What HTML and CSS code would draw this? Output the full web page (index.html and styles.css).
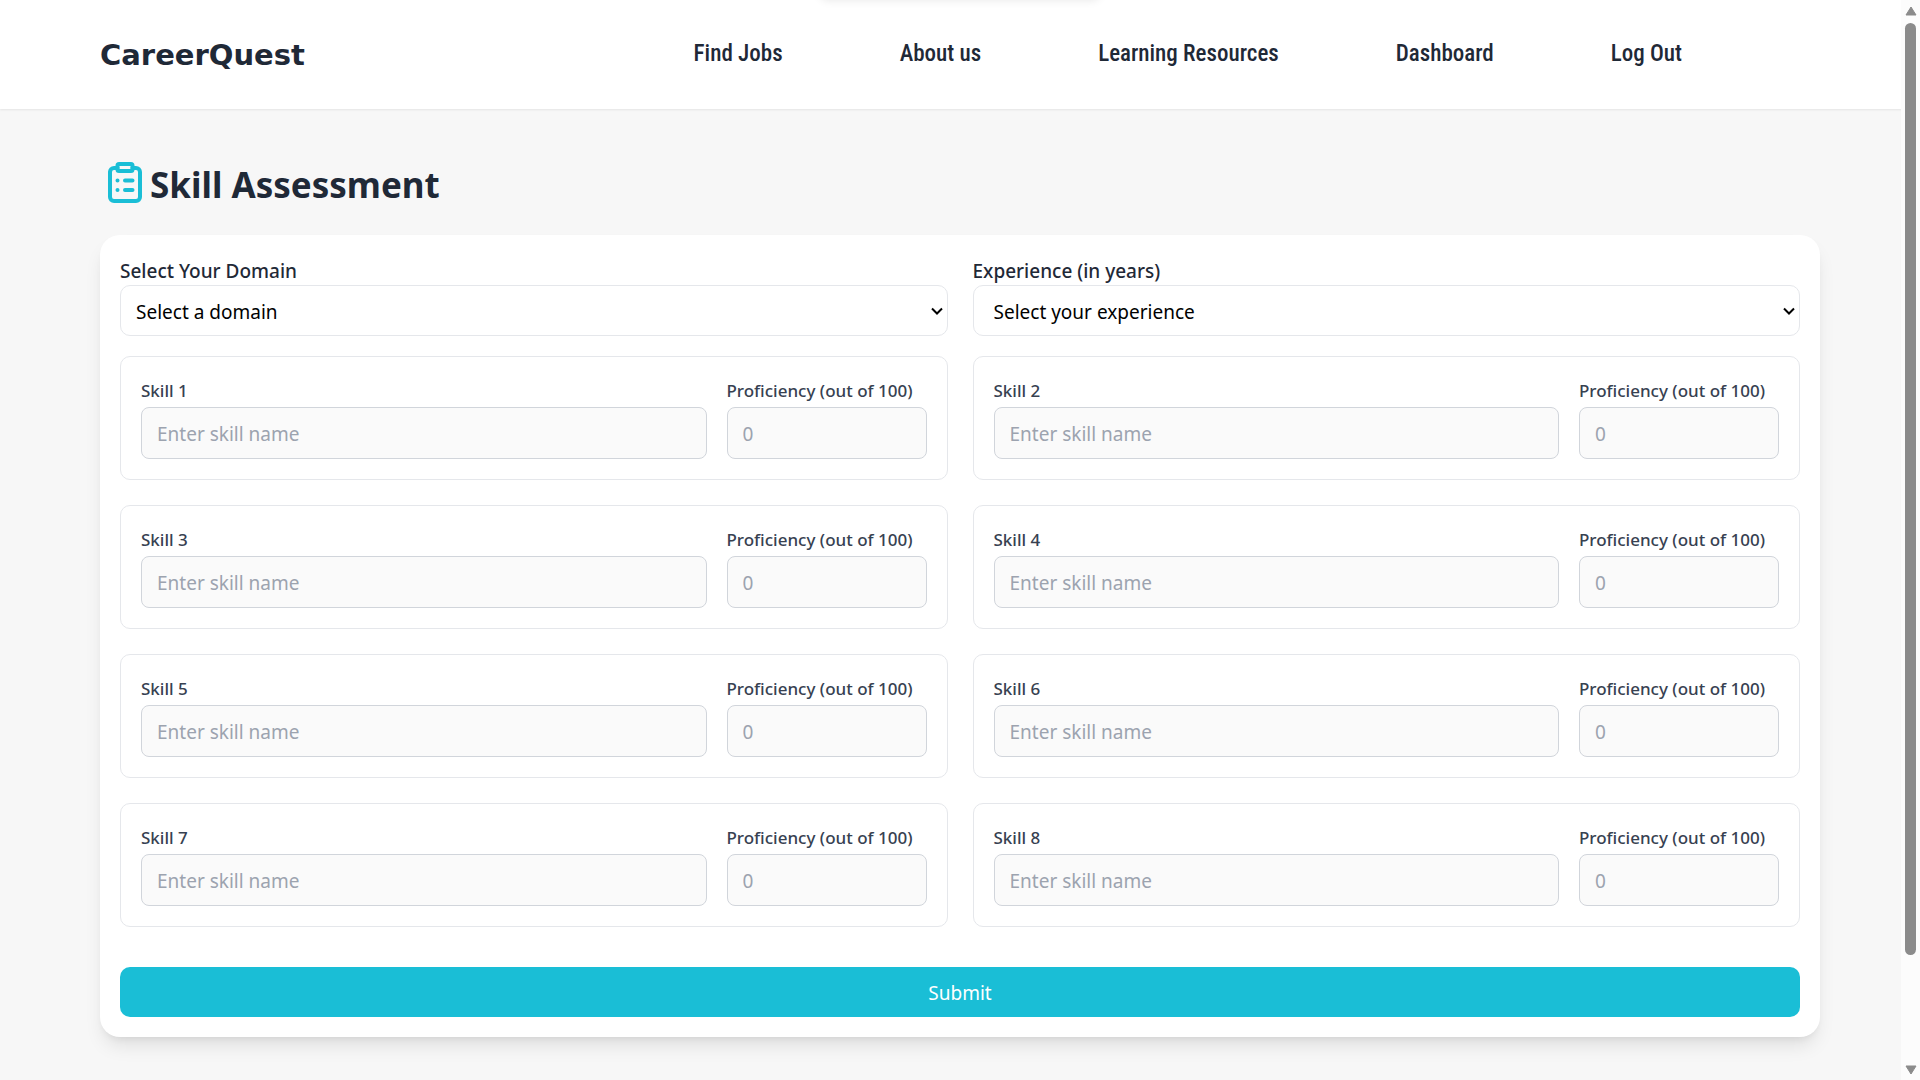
FILE: index.html
```
<!DOCTYPE html>
<html lang="en">
<head>
<meta charset="utf-8">
<meta name="viewport" content="width=device-width, initial-scale=1">
<title>CareerQuest - Skill Assessment</title>
<link rel="stylesheet" href="styles.css">
</head>
<body>
<header class="site-header">
  <a class="logo" href="#">CareerQuest</a>
  <nav class="nav">
    <a href="#">Find Jobs</a>
    <a href="#">About us</a>
    <a href="#">Learning Resources</a>
    <a href="#">Dashboard</a>
    <a href="#">Log Out</a>
  </nav>
</header>
<main class="page">
  <h1 class="title">
    <svg class="title-icon" viewBox="0 0 50 50" aria-hidden="true">
      <path d="M17.500 10H14a4 4 0 0 0-4 4v25a4 4 0 0 0 4 4h22a4 4 0 0 0 4-4V14a4 4 0 0 0-4-4h-3.500"/>
      <rect x="17.500" y="6" width="15" height="7" rx="1.500"/>
      <path d="M17.500 22.500h.01M25 22.500h7.500M17.500 32h.01M25 32h7.500"/>
    </svg>
    <span class="title-text">Skill Assessment</span>
  </h1>
  <form class="card">
    <div class="columns">
      <div class="choice">
        <label for="domain">Select Your Domain</label>
        <select id="domain" class="select"><option>Select a domain</option></select>
      </div>
      <div class="choice">
        <label for="experience">Experience (in years)</label>
        <select id="experience" class="select select-inset"><option>Select your experience</option></select>
      </div>
    </div>
    <div class="columns skills">
      <div class="skill">
        <div class="field"><label for="skill1">Skill 1</label><input id="skill1" type="text" placeholder="Enter skill name"></div>
        <div class="field"><label for="prof1">Proficiency (out of 100)</label><input id="prof1" type="number" placeholder="0"></div>
      </div>
      <div class="skill">
        <div class="field"><label for="skill2">Skill 2</label><input id="skill2" type="text" placeholder="Enter skill name"></div>
        <div class="field"><label for="prof2">Proficiency (out of 100)</label><input id="prof2" type="number" placeholder="0"></div>
      </div>
      <div class="skill">
        <div class="field"><label for="skill3">Skill 3</label><input id="skill3" type="text" placeholder="Enter skill name"></div>
        <div class="field"><label for="prof3">Proficiency (out of 100)</label><input id="prof3" type="number" placeholder="0"></div>
      </div>
      <div class="skill">
        <div class="field"><label for="skill4">Skill 4</label><input id="skill4" type="text" placeholder="Enter skill name"></div>
        <div class="field"><label for="prof4">Proficiency (out of 100)</label><input id="prof4" type="number" placeholder="0"></div>
      </div>
      <div class="skill">
        <div class="field"><label for="skill5">Skill 5</label><input id="skill5" type="text" placeholder="Enter skill name"></div>
        <div class="field"><label for="prof5">Proficiency (out of 100)</label><input id="prof5" type="number" placeholder="0"></div>
      </div>
      <div class="skill">
        <div class="field"><label for="skill6">Skill 6</label><input id="skill6" type="text" placeholder="Enter skill name"></div>
        <div class="field"><label for="prof6">Proficiency (out of 100)</label><input id="prof6" type="number" placeholder="0"></div>
      </div>
      <div class="skill">
        <div class="field"><label for="skill7">Skill 7</label><input id="skill7" type="text" placeholder="Enter skill name"></div>
        <div class="field"><label for="prof7">Proficiency (out of 100)</label><input id="prof7" type="number" placeholder="0"></div>
      </div>
      <div class="skill">
        <div class="field"><label for="skill8">Skill 8</label><input id="skill8" type="text" placeholder="Enter skill name"></div>
        <div class="field"><label for="prof8">Proficiency (out of 100)</label><input id="prof8" type="number" placeholder="0"></div>
      </div>
    </div>
    <button class="submit" type="submit">Submit</button>
  </form>
</main>
<div class="scrollbar" aria-hidden="true">
  <svg class="arrow" viewBox="0 0 12 10"><path d="M6 1 11 9H1z"/></svg>
  <div class="track"><div class="thumb"></div></div>
  <svg class="arrow" viewBox="0 0 12 10"><path d="M6 9 11 1H1z"/></svg>
</div>
</body>
</html>
```
FILE: styles.css
```
* {
  box-sizing: border-box;
}

body {
  margin: 0;
  min-height: 100vh;
  background: #f7f7f7;
  color: #1f2937;
  font-family: "Noto Sans", sans-serif;
  font-size: 19px;
  line-height: 30px;
}

.site-header {
  position: relative;
  display: flex;
  align-items: center;
  justify-content: space-between;
  height: 109px;
  padding: 0 238px 0 100px;
  background: #fff;
  box-shadow: 0 1px 2px rgba(0, 0, 0, 0.08);
}

/* Soft shade of the panel tucked above the top edge */
.site-header::before {
  content: "";
  position: absolute;
  bottom: 100%;
  left: 50%;
  width: 280px;
  height: 40px;
  margin-left: -140px;
  border-radius: 8px;
  box-shadow: 0 0 10px rgba(0, 0, 0, 0.1);
}

.logo {
  color: #1f2937;
  font: bold 29px/40px "DejaVu Sans", sans-serif;
  text-decoration: none;
}

.nav {
  display: flex;
  gap: 117px;
  padding-bottom: 2px;
}

.nav a {
  color: #1f2937;
  font: 500 23px/30px "Roboto Condensed", "Liberation Sans Narrow", Roboto, sans-serif;
  text-decoration: none;
}

.page {
  padding: 45px 100px 40px;
}

.title {
  display: flex;
  align-items: center;
  height: 58px;
  margin: 0 0 23px;
  font-size: 35px;
  font-weight: 700;
  line-height: 50px;
}

.title-text {
  padding-top: 4px;
}

.title-icon {
  width: 50px;
  height: 50px;
  fill: none;
  stroke: #1abed6;
  stroke-width: 4;
  stroke-linecap: round;
  stroke-linejoin: round;
}

.card {
  padding: 22px 20px 20px;
  border-radius: 20px;
  background: #fff;
  box-shadow: 0 12px 19px -4px rgba(0, 0, 0, 0.1), 0 5px 8px -5px rgba(0, 0, 0, 0.1);
}

.columns {
  display: grid;
  grid-template-columns: 1fr 1fr;
  gap: 25px;
}

.choice {
  display: flex;
  flex-direction: column;
  font-weight: 500;
  line-height: 28px;
}

.select {
  appearance: none;
  height: 51px;
  padding: 2px 30px 0 15px;
  border: 1px solid #e5e7eb;
  border-radius: 10px;
  background: #fff url("data:image/svg+xml,%3Csvg xmlns='http://www.w3.org/2000/svg' viewBox='0 0 12 8' fill='none' stroke='black' stroke-width='2'%3E%3Cpath d='M1 1.500 6 6.500 11 1.500'/%3E%3C/svg%3E") no-repeat right 4px center / 12px 8px;
  color: #000;
  font: inherit;
  font-weight: 400;
}

.select-inset {
  padding-left: 20px;
}

.skills {
  margin-top: 20px;
}

.skill {
  display: grid;
  grid-template-columns: 1fr 200px;
  gap: 20px;
  padding: 22px 20px 20px;
  border: 1px solid #e5e7eb;
  border-radius: 10px;
}

.field {
  display: flex;
  flex-direction: column;
  gap: 5px;
}

.field label {
  color: #374151;
  font-size: 17px;
  font-weight: 500;
  line-height: 23px;
}

.field input {
  width: 100%;
  height: 52px;
  padding: 2px 15px 0;
  border: 1px solid #d1d5db;
  border-radius: 8px;
  background: #fafafa;
  font: inherit;
}

.field input::placeholder {
  color: #9ca3af;
}

.submit {
  display: block;
  width: 100%;
  height: 50px;
  margin-top: 40px;
  padding: 2px 0 0;
  border: 0;
  border-radius: 10px;
  background: #1abed6;
  color: #fff;
  font: inherit;
}

.scrollbar {
  position: fixed;
  top: 0;
  right: 0;
  bottom: 0;
  display: flex;
  flex-direction: column;
  align-items: center;
  gap: 7px;
  width: 19px;
  padding: 6px 0 5px;
  background: #fcfcfc;
}

.arrow {
  width: 12px;
  height: 10px;
  fill: #8b8b8b;
  stroke: #8b8b8b;
  stroke-linejoin: round;
}

.track {
  flex: 1;
}

.thumb {
  width: 11px;
  height: 90%;
  border-radius: 6px;
  background: #8b8b8b;
}
```
